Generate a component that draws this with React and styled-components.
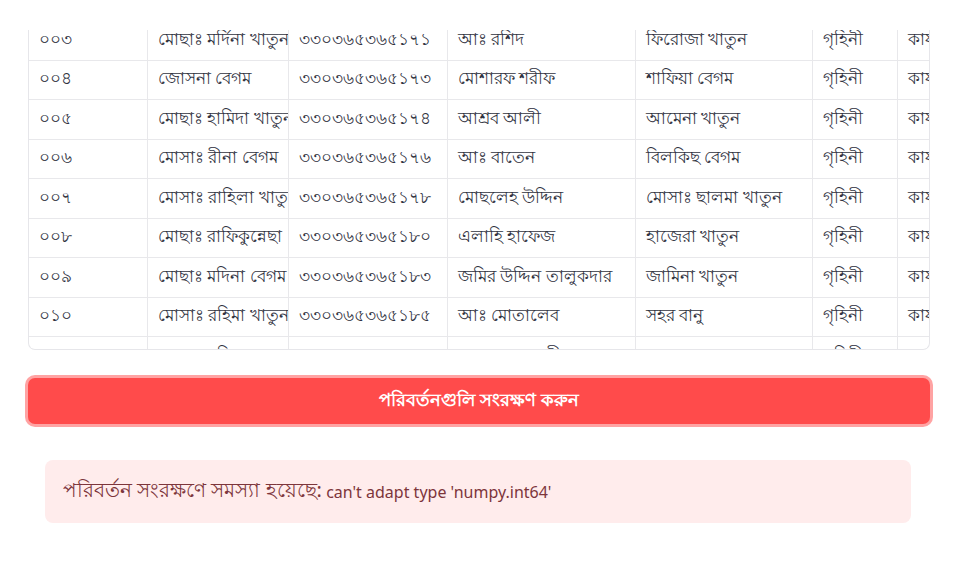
import styled, { createGlobalStyle } from "styled-components";

const GlobalStyle = createGlobalStyle`
    body {
        margin: 0;
        background: #ffffff;
        font-family: "Noto Sans", "Open Sans", sans-serif;
        color: #31333f;
    }
`;

const COLS = [119, 141, 159, 188, 177, 85, 120];

const ROWS = [
    ['০০৩', 'মোছাঃ মর্দিনা খাতুন', '৩৩০৩৬৫৩৬৫১৭১', 'আঃ রশিদ', 'ফিরোজা খাতুন', 'গৃহিনী', 'কার্যকর'],
    ['০০৪', 'জোসনা বেগম', '৩৩০৩৬৫৩৬৫১৭৩', 'মোশারফ শরীফ', 'শাফিয়া বেগম', 'গৃহিনী', 'কার্যকর'],
    ['০০৫', 'মোছাঃ হামিদা খাতুন', '৩৩০৩৬৫৩৬৫১৭৪', 'আশ্রব আলী', 'আমেনা খাতুন', 'গৃহিনী', 'কার্যকর'],
    ['০০৬', 'মোসাঃ রীনা বেগম', '৩৩০৩৬৫৩৬৫১৭৬', 'আঃ বাতেন', 'বিলকিছ বেগম', 'গৃহিনী', 'কার্যকর'],
    ['০০৭', 'মোসাঃ রাহিলা খাতুন', '৩৩০৩৬৫৩৬৫১৭৮', 'মোছলেহ উদ্দিন', 'মোসাঃ ছালমা খাতুন', 'গৃহিনী', 'কার্যকর'],
    ['০০৮', 'মোছাঃ রাফিকুন্নেছা', '৩৩০৩৬৫৩৬৫১৮০', 'এলাহি হাফেজ', 'হাজেরা খাতুন', 'গৃহিনী', 'কার্যকর'],
    ['০০৯', 'মোছাঃ মদিনা বেগম', '৩৩০৩৬৫৩৬৫১৮৩', 'জমির উদ্দিন তালুকদার', 'জামিনা খাতুন', 'গৃহিনী', 'কার্যকর'],
    ['০১০', 'মোসাঃ রহিমা খাতুন', '৩৩০৩৬৫৩৬৫১৮৫', 'আঃ মোতালেব', 'সহর বানু', 'গৃহিনী', 'কার্যকর'],
    ['০১১', 'মোসাঃ রহিমা খাতুন', '৩৩০৩৬৫৩৬৫১৮৭', 'মোসলেম আলী', 'মোসাঃ রেহেনা', 'গৃহিনী', 'কার্যকর'],
];

const App = () => {
    return (
        <>
            <GlobalStyle />
            <Main>
                <TableFrame>
                    <Grid>
                        {ROWS.map((row, r) =>
                            row.map((cell, c) => (
                                <Cell key={r + '-' + c} $last={c === row.length - 1}>
                                    {cell}
                                </Cell>
                            ))
                        )}
                    </Grid>
                </TableFrame>
                <SaveButton>পরিবর্তনগুলি সংরক্ষণ করুন</SaveButton>
                <ErrorBox>
                    <Bangla>পরিবর্তন সংরক্ষণে সমস্যা হয়েছে:</Bangla>&nbsp;can't adapt type 'numpy.int64'
                </ErrorBox>
            </Main>
        </>
    );
};

export default App;

const Main = styled.div`
    display: flex;
    flex-direction: column;
    width: 902px;
    padding: 30px 0 0 28px;
`;

const TableFrame = styled.div`
    height: 320px;
    overflow: hidden;
    border: 1px solid #e6e6ea;
    border-top: none;
    border-radius: 0 0 7px 7px;
    box-sizing: border-box;
`;

const Grid = styled.div`
    display: grid;
    grid-template-columns: ${COLS.map((w) => w + 'px').join(' ')};
    grid-auto-rows: 39.5px;
    margin-top: -9px;
`;

const Cell = styled.div`
    display: flex;
    align-items: center;
    padding: 0 10px;
    box-sizing: border-box;
    border-right: ${(p) => (p.$last ? 'none' : '1px solid #e8e8eb')};
    border-bottom: 1px solid #e8e8eb;
    font-size: 16.5px;
    color: #31333f;
    white-space: nowrap;
    overflow: hidden;
`;

const SaveButton = styled.button`
    margin-top: 28px;
    height: 46px;
    width: 100%;
    border: none;
    border-radius: 7px;
    background: #ff4b4b;
    box-shadow: 0 0 0 3px #ffa3a3;
    color: #ffffff;
    font-family: "Noto Sans", "Open Sans", sans-serif;
    font-size: 18px;
    font-weight: 600;
    cursor: pointer;
`;

const ErrorBox = styled.div`
    margin: 36px 19px 0 17px;
    padding: 0 18px;
    height: 63px;
    display: flex;
    align-items: center;
    background: #ffecec;
    border-radius: 8px;
    color: #7d353b;
    font-size: 16px;
    white-space: nowrap;
`;

const Bangla = styled.span`
    font-size: 20px;
`;
